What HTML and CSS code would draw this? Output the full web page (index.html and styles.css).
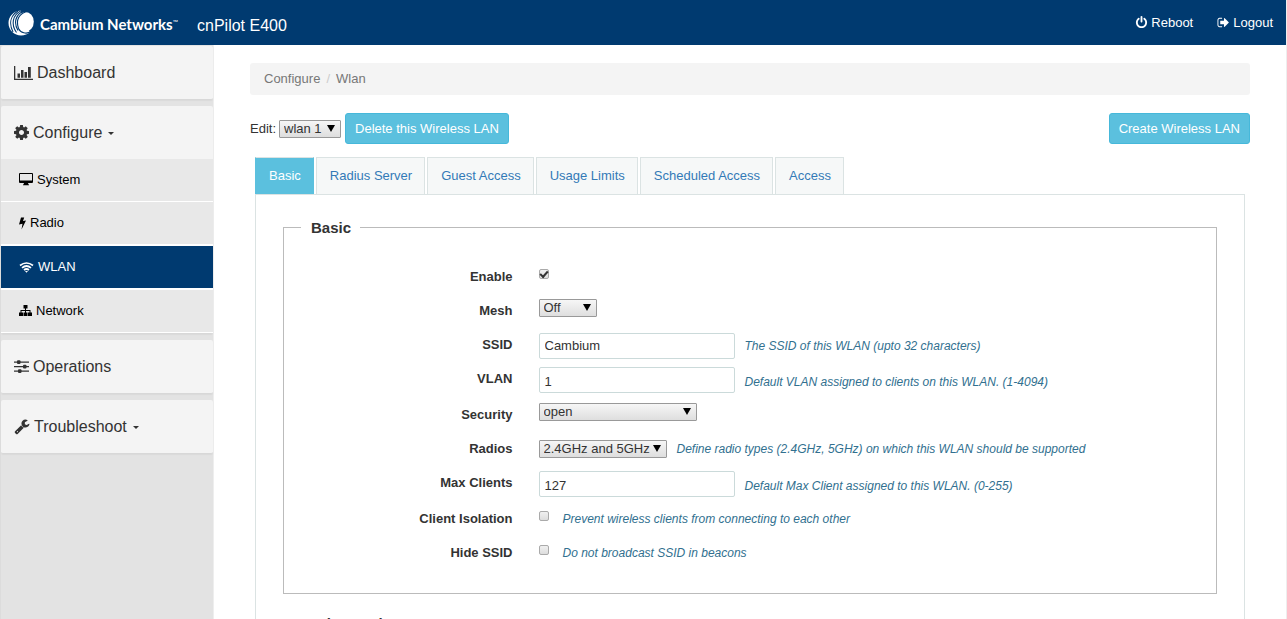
FILE: index.html
```html
<!DOCTYPE html>
<html lang="en">
<head>
<meta charset="utf-8">
<title>cnPilot E400</title>
<link rel="stylesheet" href="styles.css">
</head>
<body>
<div class="app">
  <header class="topbar">
    <a class="brand" href="#">
      <svg class="brand-mark" viewBox="0 0 26 26" aria-hidden="true">
        <path d="M13 .5C5 1 .5 7 .5 13c0 7.500 6 12.500 12.500 12.500 3.500 0 7-1.300 9-3.500L14 14z" fill="#fff"/>
        <ellipse cx="17.500" cy="11.800" rx="8.300" ry="9.800" fill="#fff"/>
        <g fill="none" stroke="#003a70" stroke-width="1.100">
          <path d="M10 1C2 6 1 14 5 22"/>
          <path d="M13.500 .5C4 5 3 15 8.500 22.500"/>
          <path d="M17 .5C7 4 5.500 13 10 20.500"/>
          <path d="M20.500 1C11 3 7.500 10 10.500 18.500c2 4.500 8 6 12.500 3"/>
        </g>
      </svg>
      <span class="brand-name">Cambium Networks<sup>™</sup></span>
    </a>
    <span class="product">cnPilot E400</span>
    <nav class="actions">
      <a href="#"><svg class="icon-13" viewBox="0 0 1792 1792" aria-hidden="true"><path fill="currentColor" d="M1664 896q0 156-61 298t-164 245-245 164-298 61-298-61-245-164-164-245-61-298q0-182 80.500-343t226.500-270q43-32 95.500-25t83.500 50q32 42 24.500 94.500t-49.500 84.500q-98 74-151.500 181t-53.500 228q0 104 40.500 198.500t109.500 163.500 163.500 109.500 198.500 40.500 198.500-40.500 163.500-109.500 109.500-163.500 40.500-198.500q0-121-53.500-228t-151.500-181q-42-32-49.500-84.500t24.500-94.500q31-43 84-50t95 25q146 109 226.500 270t80.500 343zm-640-768v640q0 52-38 90t-90 38-90-38-38-90v-640q0-52 38-90t90-38 90 38 38 90z"/></svg>Reboot</a>
      <a href="#"><svg class="icon-13" viewBox="0 0 1792 1792" aria-hidden="true"><path fill="currentColor" d="M704 1440q0 4 1 20t.5 26.500-3 23.500-10 19.500-20.500 6.500h-320q-119 0-203.500-84.500t-84.500-203.500v-704q0-119 84.500-203.500t203.500-84.500h320q13 0 22.500 9.500t9.500 22.500q0 4 1 20t.5 26.500-3 23.500-10 19.500-20.500 6.500h-320q-66 0-113 47t-47 113v704q0 66 47 113t113 47h312l11.500 1 11.500 3 8 5.500 7 9 2 13.500zm928-544q0 26-19 45l-544 544q-19 19-45 19t-45-19-19-45v-288h-448q-26 0-45-19t-19-45v-384q0-26 19-45t45-19h448v-288q0-26 19-45t45-19 45 19l544 544q19 19 19 45z"/></svg>Logout</a>
    </nav>
  </header>
  <div class="body">
    <nav class="sidebar">
      <div class="card">
        <a class="card-head" href="#"><svg class="icon-chart" viewBox="0 0 19 16" fill="currentColor" aria-hidden="true"><path d="M0 1h1.300v12.700H19V15H0zM3.500 8.500h2.500v4.200H3.500zM7 5h2.500v7.700H7zM10.500 7H13v5.700h-2.500zM14 2h2.800v10.700H14z"/></svg>Dashboard</a>
      </div>
      <div class="card">
        <a class="card-head" href="#"><svg class="icon-15" viewBox="128 128 1536 1536" aria-hidden="true"><path fill="currentColor" d="M1152 896q0-106-75-181t-181-75-181 75-75 181 75 181 181 75 181-75 75-181zm512-109v222q0 12-8 23t-20 13l-185 28q-19 54-39 91 35 50 107 138 10 12 10 25t-9 23q-27 37-99 108t-94 71q-12 0-26-9l-138-108q-44 23-91 38-16 136-29 186-7 28-36 28h-222q-14 0-24.500-8.500t-11.500-21.500l-28-184q-49-16-90-37l-141 107q-10 9-25 9-14 0-25-11-126-114-165-168-7-10-7-23 0-12 8-23 15-21 51-66.500t54-70.500q-27-50-41-99l-183-27q-13-2-21-12.500t-8-23.500v-222q0-12 8-23t19-13l186-28q14-46 39-92-40-57-107-138-10-12-10-24 0-10 9-23 26-36 98.500-107.500t94.500-71.500q13 0 26 10l138 107q44-23 91-38 16-136 29-186 7-28 36-28h222q14 0 24.500 8.500t11.500 21.500l28 184q49 16 90 37l142-107q9-9 24-9 13 0 25 10 129 119 165 170 7 8 7 22 0 12-8 23-15 21-51 66.500t-54 70.500q26 50 41 98l183 28q13 2 21 12.500t8 23.500z"/></svg>Configure<span class="caret"></span></a>
        <ul class="submenu">
          <li><a href="#"><svg width="14" height="14" viewBox="0 0 14 14" fill="currentColor" aria-hidden="true"><path fill-rule="evenodd" d="M1 0h12a1 1 0 0 1 1 1v8a1 1 0 0 1-1 1H9l.5 1.500H10v.8H4v-.8h.5L5 10H1a1 1 0 0 1-1-1V1a1 1 0 0 1 1-1zm0 1v6.500h12V1z"/></svg>System</a></li>
          <li><a href="#"><svg width="7" height="13" viewBox="0 0 7 13" fill="currentColor" aria-hidden="true"><path d="M2 .5h3.200L4 4l3-.6L2.500 12.500 3.500 6.700 0 7.500z"/></svg>Radio</a></li>
          <li class="active"><a href="#"><svg width="15" height="13" viewBox="0 0 15 13" fill="none" stroke="currentColor" stroke-width="1.700" aria-hidden="true"><path d="M1 4.500q6.500-5 13 0M3 6.800q4.500-3.600 9 0M5 9q2.500-2 5 0"/><path d="M6 10h3L7.500 11.700z" fill="currentColor" stroke="none"/></svg>WLAN</a></li>
          <li><a href="#"><svg width="13" height="13" viewBox="0 0 13 13" fill="currentColor" aria-hidden="true"><path d="M4.500 0h4v3.500H7V5h4.500v2.500H13V11H9V7.500h1.500V6H7v1.500h1.500V11h-4V7.500H6V6H2.500v1.500H4V11H0V7.500h1.500V5H6V3.500H4.500z"/></svg>Network</a></li>
        </ul>
      </div>
      <div class="card">
        <a class="card-head" href="#"><svg class="icon-15" viewBox="0 0 15 15" fill="currentColor" aria-hidden="true"><path d="M0 2.500h15v1.200H0zM0 7h15v1.200H0zM0 11.500h15v1.200H0z"/><rect x="3" y="1.300" width="3.500" height="3.600" rx="1"/><rect x="9" y="5.800" width="3.500" height="3.600" rx="1"/><rect x="4" y="10.300" width="3.500" height="3.600" rx="1"/></svg>Operations</a>
      </div>
      <div class="card">
        <a class="card-head" href="#"><svg class="icon-16" viewBox="0 64 1792 1792" aria-hidden="true"><path fill="currentColor" d="M448 1472q0-26-19-45t-45-19-45 19-19 45 19 45 45 19 45-19 19-45zm644-420l-682 682q-37 37-90 37-52 0-91-37l-106-108q-38-36-38-90 0-53 38-91l681-681q39 98 114.500 173.500t173.500 114.500zm634-435q0 39-23 106-47 134-164.500 217.500t-258.500 83.500q-185 0-316.500-131.500t-131.500-316.500 131.500-316.500 316.500-131.500q58 0 121.500 16.500t107.500 46.500q16 11 16 28t-16 28l-293 169v224l193 107q5-3 79-48.500t135.500-81 70.500-35.500q15 0 23.500 10t8.500 25z"/></svg>Troubleshoot<span class="caret"></span></a>
      </div>
    </nav>
    <main class="content">
      <ol class="breadcrumb"><li><a href="#">Configure</a></li><li>Wlan</li></ol>
      <div class="toolbar">
        <label for="wlan">Edit:</label>
        <span class="select select-wlan"><select id="wlan"><option>wlan 1</option></select></span>
        <button class="btn" type="button">Delete this Wireless LAN</button>
        <button class="btn btn-create" type="button">Create Wireless LAN</button>
      </div>
      <section class="tabbed">
        <ul class="tabs">
          <li class="active"><a href="#">Basic</a></li>
          <li><a href="#">Radius Server</a></li>
          <li><a href="#">Guest Access</a></li>
          <li><a href="#">Usage Limits</a></li>
          <li><a href="#">Scheduled Access</a></li>
          <li><a href="#">Access</a></li>
        </ul>
        <form class="panel">
          <fieldset>
            <legend>Basic</legend>
            <div class="row">
              <label for="enable">Enable</label>
              <div class="field field-check"><input id="enable" type="checkbox" checked></div>
            </div>
            <div class="row">
              <label for="mesh">Mesh</label>
              <div class="field"><span class="select select-mesh"><select id="mesh"><option>Off</option></select></span></div>
            </div>
            <div class="row">
              <label for="ssid">SSID</label>
              <div class="field"><input id="ssid" class="text" type="text" value="Cambium"><span class="hint">The SSID of this WLAN (upto 32 characters)</span></div>
            </div>
            <div class="row row-number">
              <label for="vlan">VLAN</label>
              <div class="field"><input id="vlan" class="text" type="text" inputmode="numeric" value="1"><span class="hint">Default VLAN assigned to clients on this WLAN. (1-4094)</span></div>
            </div>
            <div class="row">
              <label for="security">Security</label>
              <div class="field"><span class="select select-security"><select id="security"><option>open</option></select></span></div>
            </div>
            <div class="row">
              <label for="radios">Radios</label>
              <div class="field"><span class="select select-radios"><select id="radios"><option>2.4GHz and 5GHz</option></select></span><span class="hint">Define radio types (2.4GHz, 5GHz) on which this WLAN should be supported</span></div>
            </div>
            <div class="row row-number">
              <label for="max">Max Clients</label>
              <div class="field"><input id="max" class="text" type="text" inputmode="numeric" value="127"><span class="hint">Default Max Client assigned to this WLAN. (0-255)</span></div>
            </div>
            <div class="row">
              <label for="isolation">Client Isolation</label>
              <div class="field field-check"><input id="isolation" type="checkbox"><span class="hint">Prevent wireless clients from connecting to each other</span></div>
            </div>
            <div class="row">
              <label for="hide">Hide SSID</label>
              <div class="field field-check"><input id="hide" type="checkbox"><span class="hint">Do not broadcast SSID in beacons</span></div>
            </div>
          </fieldset>
          <fieldset>
            <legend>Advanced</legend>
          </fieldset>
        </form>
      </section>
    </main>
  </div>
</div>
</body>
</html>
```
FILE: styles.css
```css
* { box-sizing: border-box; }
body {
  margin: 0;
  background: #fff;
  color: #333;
  font: 13px/20px "Liberation Sans", Arial, sans-serif;
}
a { color: inherit; text-decoration: none; }
ul, ol { list-style: none; margin: 0; padding: 0; }
svg { flex: none; display: block; }
select, input, button { font: inherit; color: inherit; }

.app {
  display: flex;
  flex-direction: column;
  height: 100vh;
  overflow: hidden;
  border-right: 1px solid #eee;
}

.topbar {
  flex: none;
  display: flex;
  align-items: center;
  height: 45px;
  padding: 0 13px 0 8px;
  background: #003a70;
  color: #fff;
}
.brand { display: flex; align-items: center; gap: 6px; width: 189px; }
.brand-mark { width: 26px; height: 26px; }
.brand-name {
  font: 700 15px/20px Lato, sans-serif;
  white-space: nowrap;
  padding-top: 2px;
}
.brand-name sup { font-size: 7px; line-height: 0; vertical-align: 5px; font-weight: 400; }
.product { font-size: 16px; padding-top: 6px; }
.actions { display: flex; gap: 24px; margin-left: auto; }
.actions a { display: flex; align-items: center; gap: 3px; }
.icon-13 { width: 13px; height: 13px; }
.icon-15 { width: 15px; height: 15px; }
.icon-16 { width: 16px; height: 16px; }
.icon-chart { width: 19px; height: 16px; }

.body { flex: 1; display: flex; min-height: 0; }

.sidebar {
  flex: none;
  display: flex;
  flex-direction: column;
  gap: 6px;
  width: 214px;
  padding: 1px 0 0;
  border-left: 1px solid #dcdcdc;
  border-right: 1px solid #eee;
  background: #e3e3e3;
}
.card {
  background: #f4f4f4;
  border-bottom: 1px solid #d8d8d8;
  border-radius: 2px;
  box-shadow: 0 1px 1px #dadada;
}
.card-head {
  display: flex;
  align-items: center;
  gap: 4px;
  height: 53px;
  padding-left: 13px;
  font-size: 16px;
}
.caret {
  margin: 2px 0 0 2px;
  border: 3px solid transparent;
  border-top-color: currentColor;
  border-bottom: 0;
}
.submenu li { background: #e8e8e8; color: #000; border-bottom: 2px solid #fff; }
.submenu li:first-child { border-bottom-width: 1px; }
.submenu li:last-child { border-bottom-width: 1px; }
.submenu a { display: flex; align-items: center; gap: 4px; height: 42px; padding-left: 18px; }
.submenu .active { background: #003a70; color: #fff; }

.content { flex: 1; min-width: 0; padding: 18px 36px 0; }
.breadcrumb {
  display: flex;
  padding: 6px 14px;
  background: #f4f4f4;
  border-radius: 3px;
  color: #777;
}
.breadcrumb li + li::before { content: "/"; padding: 0 6px; color: #ccc; }

.toolbar { display: flex; align-items: center; gap: 4px; margin: 18px 0 13px; }
.toolbar label { margin-right: -1px; }
.btn {
  height: 31px;
  padding: 0 9px;
  border: 1px solid #46b8da;
  border-radius: 3px;
  background: #5bc0de;
  color: #fff;
}
.btn-create { margin-left: auto; }

.select { position: relative; display: inline-block; height: 18px; }
.select select {
  appearance: none;
  display: block;
  width: 100%;
  height: 18px;
  padding: 0 4px;
  border: 1px solid #999;
  border-radius: 1px;
  background: linear-gradient(#f6f6f6, #dedede);
  line-height: 16px;
}
.select::after {
  content: "";
  position: absolute;
  top: 5px;
  right: 6px;
  border: 4px solid transparent;
  border-top: 7px solid #000;
  border-bottom: 0;
  pointer-events: none;
}
.select-wlan { width: 62px; }
.select-mesh { width: 58px; }
.select-security { width: 158px; }
.select-radios { width: 128px; }

.tabbed { padding: 0 5px; }
.tabs { display: flex; gap: 2px; }
.tabs a {
  display: block;
  padding: 8px 12px 8px 13px;
  border: 1px solid #dbe3e3;
  border-bottom: 0;
  background: #f6f8f8;
  color: #337ab7;
}
.tabs .active a { background: #5bc0de; color: #fff; border-left-color: #5bc0de; border-right-color: #5bc0de; }

.panel { padding: 21px 27px; border: 1px solid #dbe3e3; }
fieldset { margin: 0 0 18px; padding: 27px 17px 18px; border: 1px solid #bbb; min-width: 0; }
legend { padding: 2px 9px 0 10px; font-size: 15px; font-weight: 700; line-height: 20px; }

.row { display: grid; grid-template-columns: 25% 1fr; min-height: 26px; margin-bottom: 8px; }
.row-number { min-height: 28px; }
.row > label { padding: 2px 13px 0 0; text-align: right; font-weight: 700; }
.field { display: flex; align-items: baseline; gap: 10px; padding-left: 13px; }
.field-check { align-items: flex-start; gap: 14px; }
.text {
  width: 196px;
  height: 26px;
  padding: 0 5px 2px;
  border: 1px solid #cbdada;
  border-radius: 2px;
  background: #fff;
}
.row-number .text { padding: 3px 5px 0; }
.hint { color: #31708f; font-size: 12px; font-style: italic; line-height: 24px; }

input[type="checkbox"] {
  appearance: none;
  display: grid;
  place-items: center;
  width: 10px;
  height: 10px;
  margin: 4px 0 0;
  border: 1px solid #aaa;
  border-radius: 2px;
  background: linear-gradient(#f0f0f0, #ddd);
}
input[type="checkbox"]:checked::before {
  content: "";
  width: 6px;
  height: 3px;
  margin-bottom: 2px;
  border: solid #333;
  border-width: 0 0 2px 2px;
  transform: rotate(-48deg);
}
```
